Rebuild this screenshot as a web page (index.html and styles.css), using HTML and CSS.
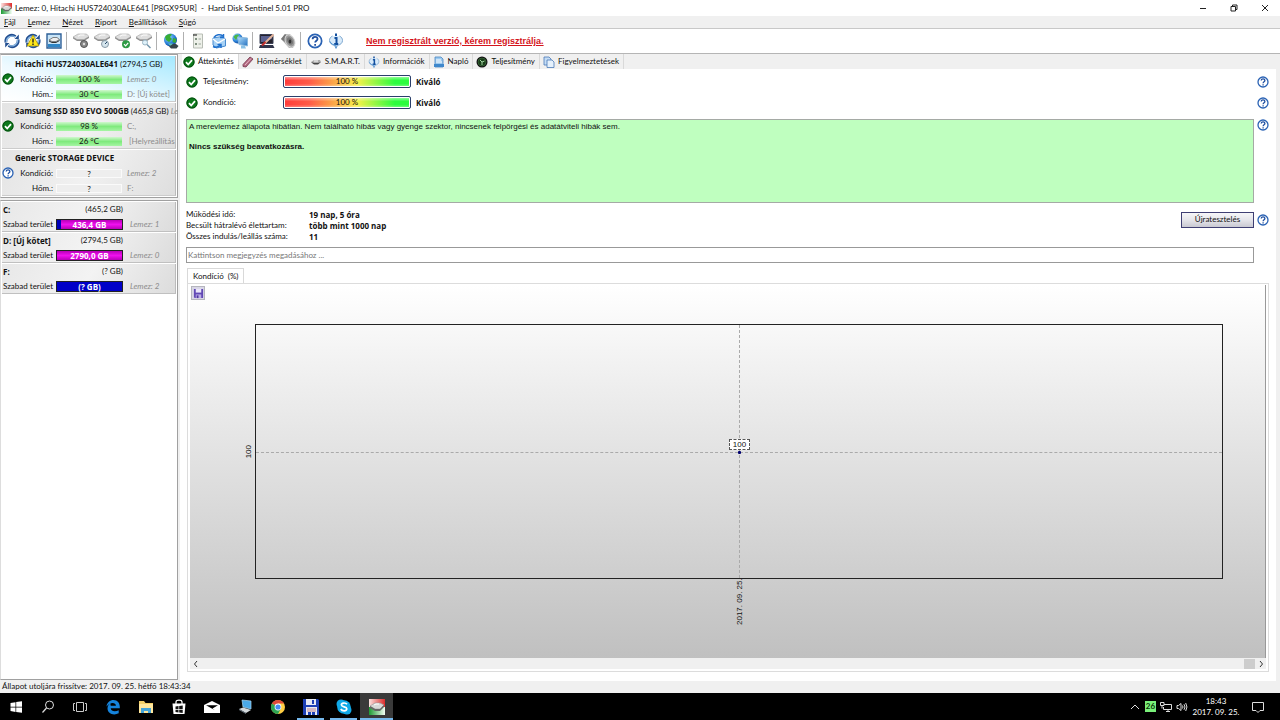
FILE: index.html
```html
<!DOCTYPE html>
<html lang="hu">
<head>
    <meta charset="UTF-8">
    <meta name="viewport" content="width=device-width, initial-scale=1.0">
    <title>Hard Disk Sentinel 5.01 PRO</title>
    <link rel="stylesheet" href="styles.css">
</head>
<body>
    <!-- Shared icons -->
    <svg class="sprite" aria-hidden="true">
        <defs>
            <linearGradient id="sky" x1="0" y1="0" x2="1" y2="1">
                <stop offset="0" stop-color="#b8e4ff"/>
                <stop offset="1" stop-color="#2470c0"/>
            </linearGradient>
            <radialGradient id="globe" cx="0.35" cy="0.3" r="0.8">
                <stop offset="0" stop-color="#9fdcff"/>
                <stop offset="0.6" stop-color="#2a80d8"/>
                <stop offset="1" stop-color="#0c3a88"/>
            </radialGradient>
            <linearGradient id="red-fade">
                <stop offset="0" stop-color="#fbe3e2"/>
                <stop offset="1" stop-color="#dd2b2b"/>
            </linearGradient>
            <linearGradient id="green-fade">
                <stop offset="0" stop-color="#1c9a33"/>
                <stop offset="1" stop-color="#f4fff4"/>
            </linearGradient>
        </defs>
        <symbol id="ok" viewBox="0 0 12 12">
            <circle cx="6" cy="6" r="5.6" fill="#0d7a1c"/>
            <circle cx="6" cy="6" r="5" fill="none" stroke="#064d10"/>
            <path d="M3 6.2l2.2 2.3L9 4.2" fill="none" stroke="#fff" stroke-width="1.8"/>
        </symbol>
        <symbol id="help" viewBox="0 0 12 12">
            <circle cx="6" cy="6" r="5" fill="#fff" stroke="#2a62b4" stroke-width="1.3"/>
            <path d="M4.2 4.6c0-2.4 3.7-2.3 3.7-.1 0 1.3-1.8 1.3-1.8 2.7M6.1 8.2v1.3" fill="none" stroke="#1f4fa0" stroke-width="1.3"/>
        </symbol>
        <symbol id="refresh" viewBox="0 0 16 16">
            <path d="M2 9.5A6 6 0 0 1 11.5 3.5" fill="none" stroke="#234f91" stroke-width="2.8"/>
            <path d="M2.3 9A6 6 0 0 1 11.2 3.8" fill="none" stroke="#8bb8e2" stroke-width="1.2"/>
            <path d="M14 6.5A6 6 0 0 1 4.5 12.5" fill="none" stroke="#234f91" stroke-width="2.8"/>
            <path d="M13.7 7A6 6 0 0 1 4.8 12.2" fill="none" stroke="#8bb8e2" stroke-width="1.2"/>
            <path d="M10.5 6h4.3V1.5z" fill="#234f91"/>
            <path d="M5.5 10H1.2v4.5z" fill="#234f91"/>
        </symbol>
        <symbol id="disk" viewBox="0 0 16 16">
            <path d="M0 4L5 1h8.5L16 3.5 11 6.500H4z" fill="#dedede" stroke="#a5a5a5" stroke-width=".6"/>
            <path d="M0 4l4 2.500h7l5-3V5l-5 3H4L0 5.500z" fill="#909090"/>
            <path d="M5 3.300l2-1.300h4.500" fill="none" stroke="#fff"/>
        </symbol>
        <symbol id="info" viewBox="0 0 16 16">
            <path d="M4.500 3C2.500 4 1.500 5.500 1.500 7.500c0 2.500 2 4.300 5 4.800L8 15.500l1.500-3.200c3-.5 5-2.300 5-4.800 0-2-1-3.500-3-4.500" fill="#d9ebfa" stroke="#7fa8d0"/>
            <path d="M8 .5V3M6.500 5h2v6M6.200 11h4" stroke="#124f9e" stroke-width="2" fill="none"/>
            <path d="M2 8.500c1 2.500 3.500 3.600 6 3.800V15" fill="none" stroke="#4c8fd0"/>
        </symbol>
        <symbol id="app" viewBox="0 0 16 16">
            <path d="M0 0h16v16H0z" fill="#fff"/>
            <path d="M0 0h16v9H0z" fill="url(#red-fade)"/>
            <path d="M0 8h16v8H0z" fill="url(#green-fade)"/>
            <path d="M1 7l5-3h5l4 2-4 4H6z" fill="#d8d8d8" stroke="#999" stroke-width=".6"/>
            <path d="M1 7l5 3h5l4-4v2l-4 4H6L1 9z" fill="#666"/>
            <path d="M5 6l2-1h3" fill="none" stroke="#fff"/>
        </symbol>
    </svg>

    <header class="titlebar">
        <svg class="app-icon"><use href="#app"/></svg>
        <span class="title">Lemez: 0, Hitachi HUS724030ALE641 [P8GX95UR] &nbsp;-&nbsp; Hard Disk Sentinel 5.01 PRO</span>
        <div class="window-buttons">
            <button aria-label="Kis méret"><svg viewBox="0 0 8 8"><path d="M1 4.5h6"/></svg></button>
            <button aria-label="Előző méret"><svg viewBox="0 0 8 8"><path d="M1 2.5h4.5V7H1zM2.5 2.5V1H7v4.5H5.5"/></svg></button>
            <button aria-label="Bezárás"><svg viewBox="0 0 8 8"><path d="M1 1l6 6M7 1L1 7"/></svg></button>
        </div>
    </header>

    <nav class="menubar">
        <button><u>F</u>ájl</button>
        <button><u>L</u>emez</button>
        <button><u>N</u>ézet</button>
        <button><u>R</u>iport</button>
        <button><u>B</u>eállítások</button>
        <button><u>S</u>úgó</button>
    </nav>

    <div class="toolbar">
        <button aria-label="Frissítés"><svg><use href="#refresh"/></svg></button>
        <button aria-label="Figyelmeztetések frissítése">
            <svg viewBox="0 0 16 16"><use href="#refresh"/><path d="M8 2l6 11H2z" fill="#ffe81a" stroke="#a08a00" stroke-width=".7"/><path d="M8 5.5v4M8 10.5V12" stroke="#222" stroke-width="1.4"/></svg>
        </button>
        <button aria-label="Lemez nézet">
            <svg viewBox="0 0 16 16"><path d="M1 1h14v14H1z" fill="#c8e4f7" stroke="#2e6098" stroke-width="1.4"/><path d="M2 11h12v3H2z" fill="#2f86c6"/><path d="M3 7l4-2.500h4L13.500 6.500 10 8.500H6z" fill="#eee" stroke="#555" stroke-width=".7"/><path d="M3 8l3 1.500h4L13.500 7.500" stroke="#333" fill="none"/></svg>
        </button>
        <span class="separator"></span>
        <button aria-label="Lemezteszt">
            <svg viewBox="0 0 16 16"><use href="#disk"/><circle cx="11" cy="11" r="3.5" fill="#888" stroke="#555"/><circle cx="11" cy="11" r="1.2" fill="#ddd"/></svg>
        </button>
        <button aria-label="Ütemezett teszt">
            <svg viewBox="0 0 16 16"><use href="#disk"/><circle cx="11" cy="11" r="3.5" fill="#d5e5ed" stroke="#8799a6"/><path d="M11 11l2-2" stroke="#246"/></svg>
        </button>
        <button aria-label="Rövid teszt">
            <svg viewBox="0 0 16 16"><use href="#disk"/><circle cx="11" cy="11.3" r="4" fill="#2e9b45"/><path d="M9 11.2l1.6 1.6 2.6-3" stroke="#fff" fill="none" stroke-width="1.2"/></svg>
        </button>
        <button aria-label="Felület vizsgálata">
            <svg viewBox="0 0 16 16"><use href="#disk"/><circle cx="9" cy="9.5" r="2.5" fill="#dff1fa" stroke="#99b5c5"/><path d="M11 11.5l3.5 3.5" stroke="#7597ac" stroke-width="1.5"/></svg>
        </button>
        <span class="separator"></span>
        <button aria-label="Weboldal">
            <svg viewBox="0 0 16 16"><circle cx="7.5" cy="7" r="6.5" fill="url(#globe)"/><path d="M2 4c2-3 5-3.5 7-2.5L7 4l2 2-3 3-3-2zM10 5l3.5 1-1 4-3-1z" fill="#38ad35"/><path d="M5 10.5h5l-2 3z" fill="#61c5b6"/><path d="M6 13.5l4-2.5h3l2.5 2-2 2.500H8z" fill="#36444a"/></svg>
        </button>
        <span class="separator"></span>
        <button aria-label="Riport">
            <svg viewBox="0 0 16 16"><path d="M3.5 1h9v14h-9z" fill="#edf0e9" stroke="#b8bdb5"/><path d="M3 2h4" stroke="#333" stroke-width="1.2"/><path d="M5 5h2v2H5zM5 10h2v2H5z" fill="#809080"/><path d="M8.5 6H11M8.5 11H11" stroke="#9aa59a"/></svg>
        </button>
        <button aria-label="Küldés">
            <svg viewBox="0 0 16 16"><path d="M2 5l9-1.5L14.5 6v7l-9 2L2 12z" fill="#a8d2f5" stroke="#4a8ccf"/><path d="M2 6l5 4 7-4" stroke="#fff" fill="none" stroke-width="1.3"/><path d="M3 4.5C5 1.5 9 .8 12 3M12.5 1v3.5H9" fill="none" stroke="#1f70cd" stroke-width="1.5"/><path d="M2 13.5c3 1.5 6 .5 8-2M6.5 11.5H10V15" fill="none" stroke="#1f70cd" stroke-width="1.5"/></svg>
        </button>
        <button aria-label="Hálózat">
            <svg viewBox="0 0 16 16"><circle cx="5.5" cy="5.5" r="5" fill="url(#globe)"/><path d="M1.5 4C3 1 6 1 7 2L4 7z" fill="#4ab848"/><path d="M5.5 4l10 1v8l-8.500-1.500z" fill="url(#sky)" stroke="#8ab8dc"/><path d="M9 12.500l4 .5 1 2.500H9z" fill="#8ac1e5"/></svg>
        </button>
        <span class="separator"></span>
        <button aria-label="Beállítások">
            <svg viewBox="0 0 16 16"><path d="M1 1.500h13v9H1z" fill="#25232d" stroke="#3b4057"/><path d="M2 3h11v3L4 9H2z" fill="#5a6090"/><path d="M1 12h13l1.500 3H0z" fill="#30354a"/><path d="M5 11l9.500-9.500" stroke="#e3b49a" stroke-width="2"/><path d="M3 12.500L6.500 9" stroke="#c12e2e" stroke-width="2"/></svg>
        </button>
        <button aria-label="Hangok">
            <svg viewBox="0 0 16 16"><path d="M1 6l4-5h5l5 7-2 7H9z" fill="#b5b5b5"/><path d="M1 6l4-5 2 2-2 6z" fill="#777"/><ellipse cx="10" cy="8" rx="4.500" ry="6.500" transform="rotate(-28 10 8)" fill="#999" stroke="#d5d5d5"/><ellipse cx="10" cy="8" rx="2.500" ry="4" transform="rotate(-28 10 8)" fill="#777"/><ellipse cx="10" cy="8.500" rx="1.300" ry="2" fill="#333"/></svg>
        </button>
        <span class="separator"></span>
        <button aria-label="Súgó"><svg><use href="#help"/></svg></button>
        <button aria-label="Információ"><svg><use href="#info"/></svg></button>
        <a class="register" href="#">Nem regisztrált verzió, kérem regisztrálja.</a>
    </div>

    <div class="workspace">
        <aside class="sidebar">
            <ul class="disks">
                <li class="disk selected">
                    <p class="disk-name"><b>Hitachi HUS724030ALE641</b> (2794,5 GB)</p>
                    <svg class="status"><use href="#ok"/></svg>
                    <span class="label">Kondíció:</span><span class="meter good">100 %</span><i class="note">Lemez: 0</i>
                    <span class="label">Hőm.:</span><span class="meter good">30 °C</span><span class="note">D: [Új kötet]</span>
                </li>
                <li class="disk">
                    <p class="disk-name"><b>Samsung SSD 850 EVO 500GB</b> (465,8 GB) <i>Le</i></p>
                    <svg class="status"><use href="#ok"/></svg>
                    <span class="label">Kondíció:</span><span class="meter good">98 %</span><span class="note">C:,</span>
                    <span class="label">Hőm.:</span><span class="meter good">26 °C</span><span class="note">&nbsp;[Helyreállítás</span>
                </li>
                <li class="disk">
                    <p class="disk-name"><b>Generic STORAGE DEVICE</b></p>
                    <svg class="status"><use href="#help"/></svg>
                    <span class="label">Kondíció:</span><span class="meter">?</span><i class="note">Lemez: 2</i>
                    <span class="label">Hőm.:</span><span class="meter">?</span><span class="note">F:</span>
                </li>
            </ul>
            <ul class="volumes">
                <li class="volume">
                    <p class="volume-name"><b>C:</b><span>(465,2 GB)</span></p>
                    <span class="free">Szabad terület</span><span class="space used">436,4 GB</span><i class="note">Lemez: 1</i>
                </li>
                <li class="volume">
                    <p class="volume-name"><b>D: [Új kötet]</b><span>(2794,5 GB)</span></p>
                    <span class="free">Szabad terület</span><span class="space">2790,0 GB</span><i class="note">Lemez: 0</i>
                </li>
                <li class="volume">
                    <p class="volume-name"><b>F:</b><span>(? GB)</span></p>
                    <span class="free">Szabad terület</span><span class="space unknown">(? GB)</span><i class="note">Lemez: 2</i>
                </li>
            </ul>
        </aside>

        <main class="content">
            <div class="tabs" role="tablist">
                <button class="tab active" role="tab" aria-selected="true"><svg><use href="#ok"/></svg>Áttekintés</button>
                <button class="tab" role="tab"><svg viewBox="0 0 12 12"><path d="M1 8.500L8 1l3 2-7 8-3-.5z" fill="#b56a82" stroke="#71334a" stroke-width=".8"/><path d="M3 9l6-6.500" stroke="#e5b8c7"/></svg>Hőmérséklet</button>
                <button class="tab" role="tab"><svg viewBox="0 0 12 12"><path d="M1 6l3-2h6l1 2-3 2H3z" fill="#aaa"/><path d="M1 6l3 1h4l3-1-3 2.500H4z" fill="#444"/><path d="M4 5h4" stroke="#fff"/></svg>S.M.A.R.T.</button>
                <button class="tab" role="tab"><svg><use href="#info"/></svg>Információk</button>
                <button class="tab" role="tab"><svg viewBox="0 0 12 12"><path d="M2 1h6l2 2v8H2z" fill="#9ccaf0" stroke="#4a86c0" stroke-width=".8"/><path d="M3 4h5M3 6h6" stroke="#fff"/><path d="M1 8h10v3H1z" fill="#3f88cc"/></svg>Napló</button>
                <button class="tab" role="tab"><svg viewBox="0 0 12 12"><circle cx="6" cy="6" r="5.500" fill="#111"/><circle cx="6" cy="6" r="4" fill="#173d17" stroke="#477747" stroke-width=".6"/><path d="M4 4l2 2 2.500-1M6 6v3" stroke="#a5d6a5" fill="none"/></svg>Teljesítmény</button>
                <button class="tab" role="tab"><svg viewBox="0 0 12 12"><path d="M1 1h5l2 2v6H1z" fill="#c5ddf5" stroke="#4a7ab8" stroke-width=".8"/><path d="M4 4h5l2 2v5.500H4z" fill="#e5f1fc" stroke="#4a7ab8" stroke-width=".8"/></svg>Figyelmeztetések</button>
            </div>

            <section class="overview">
                <div class="rating">
                    <svg><use href="#ok"/></svg>
                    <span class="rating-name">Teljesítmény:</span>
                    <span class="rating-bar">100 %</span>
                    <b>Kiváló</b>
                    <button class="help" aria-label="Súgó: teljesítmény"><svg><use href="#help"/></svg></button>
                </div>
                <div class="rating">
                    <svg><use href="#ok"/></svg>
                    <span class="rating-name">Kondíció:</span>
                    <span class="rating-bar">100 %</span>
                    <b>Kiváló</b>
                    <button class="help" aria-label="Súgó: kondíció"><svg><use href="#help"/></svg></button>
                </div>

                <div class="summary">
                    <div class="summary-text">
                        <p>A merevlemez állapota hibátlan. Nem található hibás vagy gyenge szektor, nincsenek felpörgési és adatátviteli hibák sem.</p>
                        <p><b>Nincs szükség beavatkozásra.</b></p>
                    </div>
                    <button class="help" aria-label="Súgó: állapot"><svg><use href="#help"/></svg></button>
                </div>

                <div class="details">
                    <dl>
                        <dt>Működési idő:</dt><dd>19 nap, 5 óra</dd>
                        <dt>Becsült hátralévő élettartam:</dt><dd>több mint 1000 nap</dd>
                        <dt>Összes indulás/leállás száma:</dt><dd>11</dd>
                    </dl>
                    <button class="retest">Újratesztelés</button>
                    <button class="help" aria-label="Súgó: újratesztelés"><svg><use href="#help"/></svg></button>
                </div>

                <input class="comment" type="text" aria-label="Megjegyzés" placeholder="Kattintson megjegyzés megadásához ...">

                <div class="chart-tabs" role="tablist">
                    <button class="chart-tab" role="tab" aria-selected="true">Kondíció &nbsp;(%)</button>
                </div>
                <div class="chart-panel">
                    <div class="chart">
                        <button class="save" aria-label="Mentés">
                            <svg viewBox="0 0 12 12"><path d="M1 1h10v10H2L1 10z" fill="#6148b5"/><path d="M3 1h6v4H3z" fill="#e9e5fa"/><path d="M3 7h6v4H3z" fill="#b9abe5"/><path d="M4 8h2v3H4z" fill="#5036a2"/></svg>
                        </button>
                        <div class="plot-row">
                            <span class="axis-y">100</span>
                            <div class="plot">
                                <span class="point-label">100</span>
                                <span class="point"></span>
                            </div>
                        </div>
                        <span class="axis-x">2017. 09. 25.</span>
                    </div>
                    <div class="scrollbar">
                        <button aria-label="Görgetés balra"><svg viewBox="0 0 8 8"><path d="M5 1L2.500 4 5 7"/></svg></button>
                        <span class="thumb"></span>
                        <button aria-label="Görgetés jobbra"><svg viewBox="0 0 8 8"><path d="M3 1l2.500 3L3 7"/></svg></button>
                    </div>
                </div>
            </section>
        </main>
    </div>

    <footer class="statusbar">Állapot utoljára frissítve: 2017. 09. 25. hétfő 18:43:34</footer>

    <div class="taskbar">
        <div class="system">
            <button aria-label="Start"><svg viewBox="0 0 16 16"><path d="M2.5 4l5-.8v4.5h-5zM8.2 3.1L14 2.3v5.400H8.200zM2.500 8.400h5v4.500l-5-.8zM8.200 8.400H14v5.400l-5.800-.8z" fill="#fff"/></svg></button>
            <button aria-label="Keresés"><svg viewBox="0 0 16 16"><circle cx="9.500" cy="6" r="4" fill="none" stroke="#ddd"/><path d="M6.500 9L2.500 13.500" stroke="#ddd" stroke-width="1.200"/></svg></button>
            <button aria-label="Feladatnézet"><svg viewBox="0 0 16 16"><path d="M4.500 3.500h7v9h-7zM3 4.500H1.500v7H3M13 4.500h1.500v7H13" fill="none" stroke="#ccc"/></svg></button>
        </div>
        <div class="apps">
            <button aria-label="Edge"><svg viewBox="0 0 16 16"><path d="M1.500 7.500C2 3.500 5 1 8.500 1c4 0 6.300 3 6.300 6.800v1.500H5.700c.2 3.500 5 3.700 8 2v3c-4.700 2.500-11.200.8-11.200-5 0-2.500 1.500-4.300 3.500-5.200C5 5 5.700 6 5.700 6.800h5.200C10.900 3.300 5 2.800 1.500 7.500z" fill="#1583dc"/></svg></button>
            <button aria-label="Fájlkezelő"><svg viewBox="0 0 16 16"><path d="M1 2h5l1.500 2H15v10H1z" fill="#f3cf68"/><path d="M1 5h14v9H1z" fill="#ffe79d"/><path d="M3 9h10v5h-3v-2H6v2H3z" fill="#45a5d9"/></svg></button>
            <button aria-label="Áruház"><svg viewBox="0 0 16 16"><path d="M1.500 4.500h13L13.500 15h-11z" fill="#fff"/><path d="M5 5V3c0-2.500 6-2.500 6 0v2" fill="none" stroke="#fff" stroke-width="1.200"/><path d="M4.500 7.500l3-.4V10h-3zM8.200 7l3.500-.5V10H8.200zM4.500 10.700h3v2.700l-3-.4zM8.200 10.700h3.500V14l-3.500-.5z" fill="#111"/></svg></button>
            <button aria-label="Posta"><svg viewBox="0 0 16 16"><path d="M0 6l8-4 8 4v8H0z" fill="#fff"/><path d="M2 6.300h12L8.500 9.500l2.500 1.700z" fill="#000"/></svg></button>
            <button aria-label="Sajátgép"><svg viewBox="0 0 16 16"><path d="M5 1l9 1v8l-8-2z" fill="#4aa9e8" stroke="#a9d8f5" stroke-width=".7"/><path d="M2 10l4-1.500 8 2.500-5 3z" fill="#d4d9dc"/><path d="M2 10l7 4v1L2 11z" fill="#6b7883"/></svg></button>
            <button aria-label="Chrome"><svg viewBox="0 0 16 16"><circle cx="8" cy="8" r="7" fill="#ffce43"/><path d="M8 8L1.900 4.500A7 7 0 0 1 14.100 4.500H8z" fill="#df4939"/><path d="M1.900 4.500A7 7 0 0 0 8 15l3-5.500L8 8z" fill="#2da454"/><circle cx="8" cy="8" r="3.400" fill="#fff"/><circle cx="8" cy="8" r="2.600" fill="#468cf0"/></svg></button>
            <button class="running" aria-label="Total Commander"><svg viewBox="0 0 16 16"><path d="M0 0h15l1 1v15H0z" fill="#1d3fb5"/><path d="M3 0h10v6H3zM3 8h11v8H3z" fill="#e7eaf5"/><path d="M9 1h2v4H9z" fill="#1d3fb5"/><path d="M4 10h9M4 12h9" stroke="#b96c73" stroke-width=".8"/><path d="M5 13h3v3H5zM9 13h3v3H9z" fill="#1d3fb5"/></svg></button>
            <button class="running" aria-label="Skype"><svg viewBox="0 0 16 16"><circle cx="5" cy="5" r="4.500" fill="#10a9e8"/><circle cx="11" cy="11" r="4.500" fill="#10a9e8"/><circle cx="8" cy="8" r="6.800" fill="#10a9e8"/><path d="M11 5.300C9.500 3.300 5.200 3.700 5.400 6c.2 2.400 5.300 1.400 5.400 3.800.1 2.600-4.700 2.700-6 .2" fill="none" stroke="#fff" stroke-width="1.700"/></svg></button>
            <button class="running current" aria-label="Hard Disk Sentinel"><svg><use href="#app"/></svg></button>
        </div>
        <div class="tray">
            <button aria-label="Rejtett ikonok"><svg viewBox="0 0 12 12"><path d="M2 8l4-4 4 4" fill="none" stroke="#ddd"/></svg></button>
            <span class="temperature">26</span>
            <button aria-label="Hálózat"><svg viewBox="0 0 12 12"><path d="M4 3.500h7.500v5H3.500V6M6 10.500h4M8 8.500v2M.5 1.500H4v3H.5zM2 4.500v3" fill="none" stroke="#ddd"/></svg></button>
            <button aria-label="Hangerő"><svg viewBox="0 0 12 12"><path d="M1 4.500h1.500L5 2.500v7L2.500 7.500H1zM6.500 4.500q1 1.500 0 3M8 3.200q2 2.800 0 5.600M9.700 2q2.500 4 0 8" fill="none" stroke="#ddd"/></svg></button>
            <div class="clock"><span>18:43</span><span>2017. 09. 25.</span></div>
            <button class="action-center" aria-label="Műveletközpont"><svg viewBox="0 0 12 12"><path d="M.5 1.500h11v8H8L6 11.500l-2-2H.5z" fill="none" stroke="#ddd"/></svg></button>
        </div>
    </div>
</body>
</html>
```

FILE: styles.css
```css
:root {
    --face: #f0f0f0;
    --line: #a0a0a0;
    --ui-font: Lato, "Noto Sans", sans-serif;
    --bold-font: "Open Sans", "Noto Sans", sans-serif;
    --arial: "Liberation Sans", Arial, sans-serif;
}

* {
    box-sizing: border-box;
    margin: 0;
    padding: 0;
}

body {
    display: flex;
    flex-direction: column;
    height: 100vh;
    font-family: var(--ui-font);
    font-size: 8px;
    line-height: 11px;
    color: #111;
    background: var(--face);
    overflow: hidden;
}

b {
    font-family: var(--bold-font);
}

button {
    font: inherit;
    color: inherit;
    border: none;
    background: none;
}

button svg {
    display: block;
}

ul {
    list-style: none;
}

.sprite {
    position: absolute;
    width: 0;
    height: 0;
}

/* Title bar */
.titlebar {
    display: flex;
    align-items: center;
    height: 16px;
    padding-left: 1px;
    background: #fff;
}

.app-icon {
    width: 11px;
    height: 11px;
    margin-right: 3px;
}

.window-buttons {
    display: flex;
    margin-left: auto;
}

.window-buttons button {
    display: flex;
    align-items: center;
    justify-content: center;
    width: 31px;
    height: 15px;
}

.window-buttons svg {
    width: 8px;
    height: 8px;
    fill: none;
    stroke: #222;
}

/* Menu */
.menubar {
    display: flex;
    gap: 12px;
    height: 12px;
    padding-left: 4px;
}

/* Toolbar */
.toolbar {
    display: flex;
    align-items: center;
    height: 26px;
    padding-left: 1px;
    background: #fff;
    border-top: 1px solid #c8c8c8;
    border-bottom: 1px solid #b5b5b5;
}

.toolbar button {
    display: flex;
    align-items: center;
    justify-content: center;
    width: 21px;
    height: 22px;
}

.toolbar svg {
    width: 16px;
    height: 16px;
}

.separator {
    width: 1px;
    height: 18px;
    margin: 0 3px 0 2px;
    background: #b0b0b0;
}

.register {
    margin-left: 20px;
    font-family: var(--arial);
    font-size: 9px;
    font-weight: bold;
    color: #d4141c;
}

/* Main area */
.workspace {
    display: flex;
    flex: 1;
    min-height: 0;
    gap: 2px;
    padding-right: 4px;
}

.sidebar {
    display: flex;
    flex-direction: column;
    gap: 2px;
    width: 178px;
    padding-bottom: 1px;
}

.disks,
.volumes {
    display: flex;
    flex-direction: column;
    gap: 1px;
    padding: 1px;
    background: #fff;
    border: 1px solid var(--line);
    border-left-color: #ddd;
}

.volumes {
    flex: 1;
}

.disk {
    display: grid;
    grid-template-columns: 12px 36px 66px 1fr;
    grid-template-rows: 15px 16px 14px;
    align-items: center;
    column-gap: 3px;
    white-space: nowrap;
    background: linear-gradient(120deg, #e4e4e4, #f1f1f1 50%, #dedede);
    border-right: 1px solid #bbb;
    border-bottom: 1px solid #ccc;
}

.disk.selected {
    background: linear-gradient(15deg, #fff, #eefaff 40%, #a5e9ff);
}

.disk-name {
    grid-column: 1 / -1;
    padding-left: 13px;
}

.disk-name i,
.note {
    color: #8c8c8c;
}

.status {
    grid-row: 2;
    width: 12px;
    height: 12px;
}

.label {
    grid-column: 2;
    text-align: right;
}

.meter {
    height: 9px;
    line-height: 9px;
    text-align: center;
    background: #eee;
    border: 1px solid #fafafa;
}

.meter.good {
    background: linear-gradient(#d0f8ce, #7fea7d 50%, #a6f5a4);
    border: none;
}

.note {
    padding-left: 2px;
}

.volume {
    display: grid;
    grid-template-columns: 52px 67px 1fr;
    grid-template-rows: 15px 14px;
    align-items: center;
    column-gap: 1px;
    padding-left: 1px;
    white-space: nowrap;
    background: linear-gradient(120deg, #e8e8e8, #f3f3f3 50%, #dcdcdc);
    border-right: 1px solid #bbb;
    border-bottom: 1px solid #c0c0c0;
}

.volume-name {
    display: flex;
    grid-column: 1 / 3;
    justify-content: space-between;
}

.free {
    grid-column: 1;
}

.space {
    height: 11px;
    font-family: var(--bold-font);
    line-height: 9px;
    font-weight: bold;
    text-align: center;
    color: #fff;
    background: linear-gradient(#b800b8, #f010ee 50%, #b800b8);
    border: 1px solid #222;
}

.space.used {
    background: linear-gradient(90deg, #0000b8 4px, transparent 4px), linear-gradient(#b800b8, #f010ee 50%, #b800b8);
}

.space.unknown {
    background: #0000c8;
}

.volume .note {
    padding-left: 6px;
}

/* Tabs */
.content {
    display: flex;
    flex: 1;
    flex-direction: column;
    min-width: 0;
    background: #fff;
}

.tabs {
    display: flex;
    height: 15px;
    padding-left: 2px;
    background: var(--face);
}

.tab {
    display: flex;
    align-items: center;
    gap: 3px;
    height: 15px;
    padding: 0 4px 0 3px;
    border-right: 1px solid #d9d9d9;
}

.tab.active {
    padding-left: 1px;
    background: #fff;
}

.tab svg {
    width: 12px;
    height: 12px;
}

/* Overview */
.overview {
    display: flex;
    flex: 1;
    flex-direction: column;
    min-height: 0;
    padding: 2px 7px 9px 6px;
}

.rating {
    display: flex;
    align-items: center;
    height: 21px;
}

.rating svg,
.help svg {
    width: 12px;
    height: 12px;
}

.rating-name {
    width: 80px;
    margin-left: 5px;
}

.rating-bar {
    width: 128px;
    height: 13px;
    margin-right: 5px;
    line-height: 11px;
    text-align: center;
    background: linear-gradient(rgba(255, 255, 255, 0.6), transparent 40%, transparent 70%, rgba(255, 255, 255, 0.4)), linear-gradient(90deg, #ff3b3b, #ff5a48 20%, #f7f04a 58%, #2bfc3f 88%);
    border: 1px solid #2b3f6b;
    border-radius: 2px;
    box-shadow: inset 0 0 0 1px #fff;
}

.rating .help {
    margin-left: auto;
}

.summary {
    display: flex;
    align-items: flex-start;
    gap: 3px;
    margin-top: 6px;
}

.summary-text {
    flex: 1;
    height: 84px;
    padding: 2px;
    font-family: var(--arial);
    line-height: 10px;
    background: #bfffbf;
    border: 1px solid #a5aaa5;
}

.summary-text b {
    font-family: inherit;
}

.summary-text p + p {
    margin-top: 10px;
}

.details {
    display: flex;
    align-items: center;
    gap: 3px;
    margin-top: 6px;
}

.details dl {
    display: grid;
    flex: 1;
    grid-template-columns: 123px 1fr;
}

.details dd {
    font-family: var(--bold-font);
    font-weight: bold;
}

.retest {
    width: 73px;
    height: 16px;
    margin-bottom: 12px;
    background: linear-gradient(#f6f6f8, #e5e5ea 50%, #c9c9d2);
    border: 1px solid #3f3f73;
}

.details .help {
    margin-bottom: 12px;
}

.comment {
    height: 16px;
    margin: 5px 15px 5px 0;
    padding: 0 1px;
    font: inherit;
    border: 1px solid #999;
}

.comment::placeholder {
    color: #777;
    opacity: 1;
}

/* Chart */
.chart-tabs {
    display: flex;
}

.chart-tab {
    height: 15px;
    margin-left: 1px;
    padding: 0 5px;
    background: #fff;
    border: 1px solid #d9d9d9;
    border-bottom: none;
}

.chart-panel {
    display: flex;
    flex: 1;
    flex-direction: column;
    min-height: 0;
    margin-left: 1px;
    padding: 1px 2px 2px;
    border: 1px solid #dcdcdc;
}

.chart {
    display: flex;
    flex: 1;
    flex-direction: column;
    min-height: 0;
    padding: 1px 42px 33px 1px;
    background: linear-gradient(#fff, #c0c0c0);
    border-right: 1px solid #999;
}

.save {
    display: flex;
    align-items: center;
    justify-content: center;
    width: 14px;
    height: 14px;
    background: #d8d6e6;
    border: 1px solid #b5b5bd;
}

.save svg {
    width: 11px;
    height: 11px;
}

.plot-row {
    display: flex;
    flex: 1;
    align-items: center;
    margin-top: 24px;
}

.axis-y {
    width: 11px;
    margin: 0 1px 0 52px;
    font-family: var(--arial);
    writing-mode: vertical-rl;
    rotate: 180deg;
    text-align: center;
}

.plot {
    position: relative;
    flex: 1;
    align-self: stretch;
    border: 1px solid #222;
}

/* Dashed cross hair through the measured value */
.plot::before,
.plot::after {
    content: "";
    position: absolute;
}

.plot::before {
    top: 50%;
    left: 0;
    right: 0;
    border-top: 1px dashed #aaa;
}

.plot::after {
    top: 0;
    bottom: 0;
    left: 50%;
    border-left: 1px dashed #aaa;
}

.point,
.point-label {
    position: absolute;
    z-index: 1;
    top: 50%;
    left: 50%;
}

.point {
    width: 3px;
    height: 3px;
    margin: -1px;
    background: #000070;
    border-radius: 1px;
}

.point-label {
    width: 21px;
    height: 11px;
    margin: -13px -10px;
    font-family: var(--arial);
    line-height: 9px;
    text-align: center;
    background: #fff;
    border: 1px dashed #555;
}

.axis-x {
    height: 46px;
    margin-left: 64px;
    align-self: center;
    font-family: var(--arial);
    white-space: nowrap;
    writing-mode: vertical-rl;
    rotate: 180deg;
    text-align: right;
}

.scrollbar {
    display: flex;
    align-items: center;
    justify-content: space-between;
    height: 11px;
    background: var(--face);
}

.scrollbar button {
    width: 11px;
}

.scrollbar svg {
    width: 8px;
    height: 8px;
    margin: auto;
    fill: none;
    stroke: #333;
}

.thumb {
    width: 11px;
    height: 10px;
    margin-left: auto;
    background: #cdcdcd;
}

/* Status bar and taskbar */
.statusbar {
    height: 12px;
    padding-left: 2px;
}

.taskbar {
    display: flex;
    height: 27px;
    color: #fff;
    background: #000;
}

.system,
.apps,
.tray {
    display: flex;
}

.system button,
.apps button {
    display: flex;
    align-items: center;
    justify-content: center;
    width: 33px;
}

.system button {
    width: 32px;
}

.taskbar svg {
    width: 16px;
    height: 16px;
}

.apps .running {
    width: 27px;
    margin: 0 3px;
    padding-top: 2px;
    border-bottom: 2px solid #76b9ed;
}

.apps .current {
    width: 33px;
    margin: 0;
    background: #3a3a3a;
}

.tray {
    align-items: center;
    gap: 4px;
    margin-left: auto;
    padding-right: 16px;
}

.taskbar .tray svg {
    width: 12px;
    height: 12px;
}

.temperature {
    width: 11px;
    height: 11px;
    font-weight: bold;
    text-align: center;
    color: #063306;
    background: #7af07a;
}

.clock {
    display: flex;
    flex-direction: column;
    align-items: center;
    width: 48px;
}

.action-center {
    margin-left: 8px;
}
```
